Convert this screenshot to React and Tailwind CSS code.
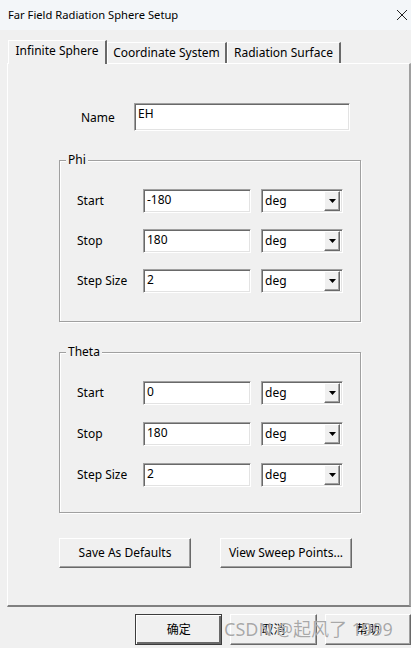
import { useState } from "react";

const font = { fontFamily: '"Noto Sans", "Noto Sans CJK SC", sans-serif' };

function Sunken({ className = "", children }) {
  return (
    <div
      className={`flex items-center bg-white border border-t-[#a0a0a0] border-l-[#a0a0a0] border-b-[#ffffff] border-r-[#ffffff] shadow-[inset_1px_1px_0_#696969,inset_-1px_-1px_0_#e3e3e3] ${className}`}
    >
      {children}
    </div>
  );
}

function TextField({ value, className = "" }) {
  return (
    <Sunken className={`items-start ${className}`}>
      <span className="pl-[3px] pt-[1px] text-[12px] leading-[18px] text-black">{value}</span>
    </Sunken>
  );
}

function UnitSelect() {
  return (
    <Sunken className="h-[24px] w-[82px] justify-between">
      <span className="pl-[3px] text-[12px] text-black">deg</span>
      <div className="mr-[2px] flex h-[20px] w-[16px] items-center justify-center bg-[#f0f0f0] border border-t-[#ffffff] border-l-[#ffffff] border-b-[#696969] border-r-[#696969] shadow-[inset_-1px_-1px_0_#a0a0a0]">
        <svg width="7" height="4" viewBox="0 0 7 4">
          <path d="M0 0h7L3.5 4z" fill="#000" />
        </svg>
      </div>
    </Sunken>
  );
}

function Row({ label, value }) {
  return (
    <div className="flex h-[24px] items-center">
      <span className="w-[66px] text-[12px] text-black">{label}</span>
      <TextField value={value} className="h-[24px] w-[108px]" />
      <div className="w-[10px]" />
      <UnitSelect />
    </div>
  );
}

function Group({ title, rows, gaps, bottom }) {
  return (
    <div className="relative ml-[51px] w-[302px] border border-[#a0a0a0] shadow-[1px_1px_0_#ffffff,inset_1px_1px_0_#ffffff] pl-[17px] pt-[28px]" style={{ paddingBottom: bottom }}>
      <span className="absolute -top-[10px] left-[6px] bg-[#f0f0f0] px-[2px] text-[12px] leading-[18px] text-black">{title}</span>
      <div className="flex flex-col" style={{ gap: gaps }}>
        {rows.map((r) => (
          <Row key={r[0]} label={r[0]} value={r[1]} />
        ))}
      </div>
    </div>
  );
}

function RaisedButton({ children, className = "", strong = false }) {
  return (
    <button
      className={`flex items-center justify-center bg-[#f0f0f0] text-[12px] text-black border ${
        strong
          ? "border-[#3c3c3c] shadow-[inset_1px_1px_0_#ffffff,inset_-2px_-2px_0_#696969]"
          : "border-t-[#ffffff] border-l-[#ffffff] border-b-[#696969] border-r-[#696969] shadow-[inset_-1px_-1px_0_#a0a0a0]"
      } ${className}`}
    >
      {children}
    </button>
  );
}

export default function App() {
  const [tab, setTab] = useState(0);
  const tabs = [
    { name: "Infinite Sphere", w: "w-[99px]" },
    { name: "Coordinate System", w: "w-[120px]" },
    { name: "Radiation Surface", w: "w-[114px]" }
  ];

  return (
    <div className="relative h-[648px] w-[411px] overflow-hidden bg-[#f0f0f0]" style={font}>
      <div className="flex h-[30px] items-center justify-between bg-[#f3f6f9] pl-[8px] pr-[3px]">
        <span className="text-[11.2px] text-black">Far Field Radiation Sphere Setup</span>
        <svg width="12" height="12" viewBox="0 0 12 12">
          <path d="M1 1l10 10M11 1L1 11" stroke="#222" strokeWidth="1" />
        </svg>
      </div>

      <div className="ml-[8px] mt-[10px] flex h-[23px] items-end">
        {tabs.map((t, i) => (
          <button
            key={t.name}
            onClick={() => setTab(i)}
            className={`flex items-center justify-center border-l border-t border-r-2 border-l-[#ffffff] border-t-[#ffffff] border-r-[#696969] text-[12px] text-black ${t.w} ${
              i === tab ? "relative z-10 -mb-[1px] h-[24px] bg-[#f0f0f0] pb-[3px]" : "h-[21px] bg-[#f0f0f0]"
            }`}
          >
            {t.name}
          </button>
        ))}
      </div>

      <div className="ml-[7px] h-[544px] w-[404px] border-l border-t border-r-2 border-b-2 border-l-[#ffffff] border-t-[#ffffff] border-r-[#a0a0a0] border-b-[#808080] pt-[39px]">
        <div className="flex h-[28px] items-center">
          <span className="ml-[73px] w-[53px] pt-[2px] text-[12px] text-black">Name</span>
          <TextField value="EH" className="h-[28px] w-[216px]" />
        </div>

        <div className="h-[29px]" />
        <Group
          title="Phi"
          rows={[["Start", "-180"], ["Stop", "180"], ["Step Size", "2"]]}
          gaps="16px"
          bottom="28px"
        />

        <div className="h-[30px]" />
        <Group
          title="Theta"
          rows={[["Start", "0"], ["Stop", "180"], ["Step Size", "2"]]}
          gaps="17px"
          bottom="25px"
        />

        <div className="ml-[51px] mt-[25px] flex gap-[29px]">
          <RaisedButton className="h-[30px] w-[132px]">Save As Defaults</RaisedButton>
          <RaisedButton className="h-[30px] w-[132px]">View Sweep Points...</RaisedButton>
        </div>
      </div>

      <div className="ml-[135px] mt-[7px] flex gap-[8px]">
        <RaisedButton strong className="h-[31px] w-[88px]">确定</RaisedButton>
        <RaisedButton className="h-[31px] w-[87px]">取消</RaisedButton>
        <RaisedButton className="h-[31px] w-[87px]">帮助</RaisedButton>
      </div>

      <span className="pointer-events-none absolute left-[224px] top-[617px] whitespace-nowrap text-[18px] leading-[24px] text-[#8c8c8c]/75 [text-shadow:0_0_1px_#ffffff]">
        CSDN @起风了 1999
      </span>
    </div>
  );
}
